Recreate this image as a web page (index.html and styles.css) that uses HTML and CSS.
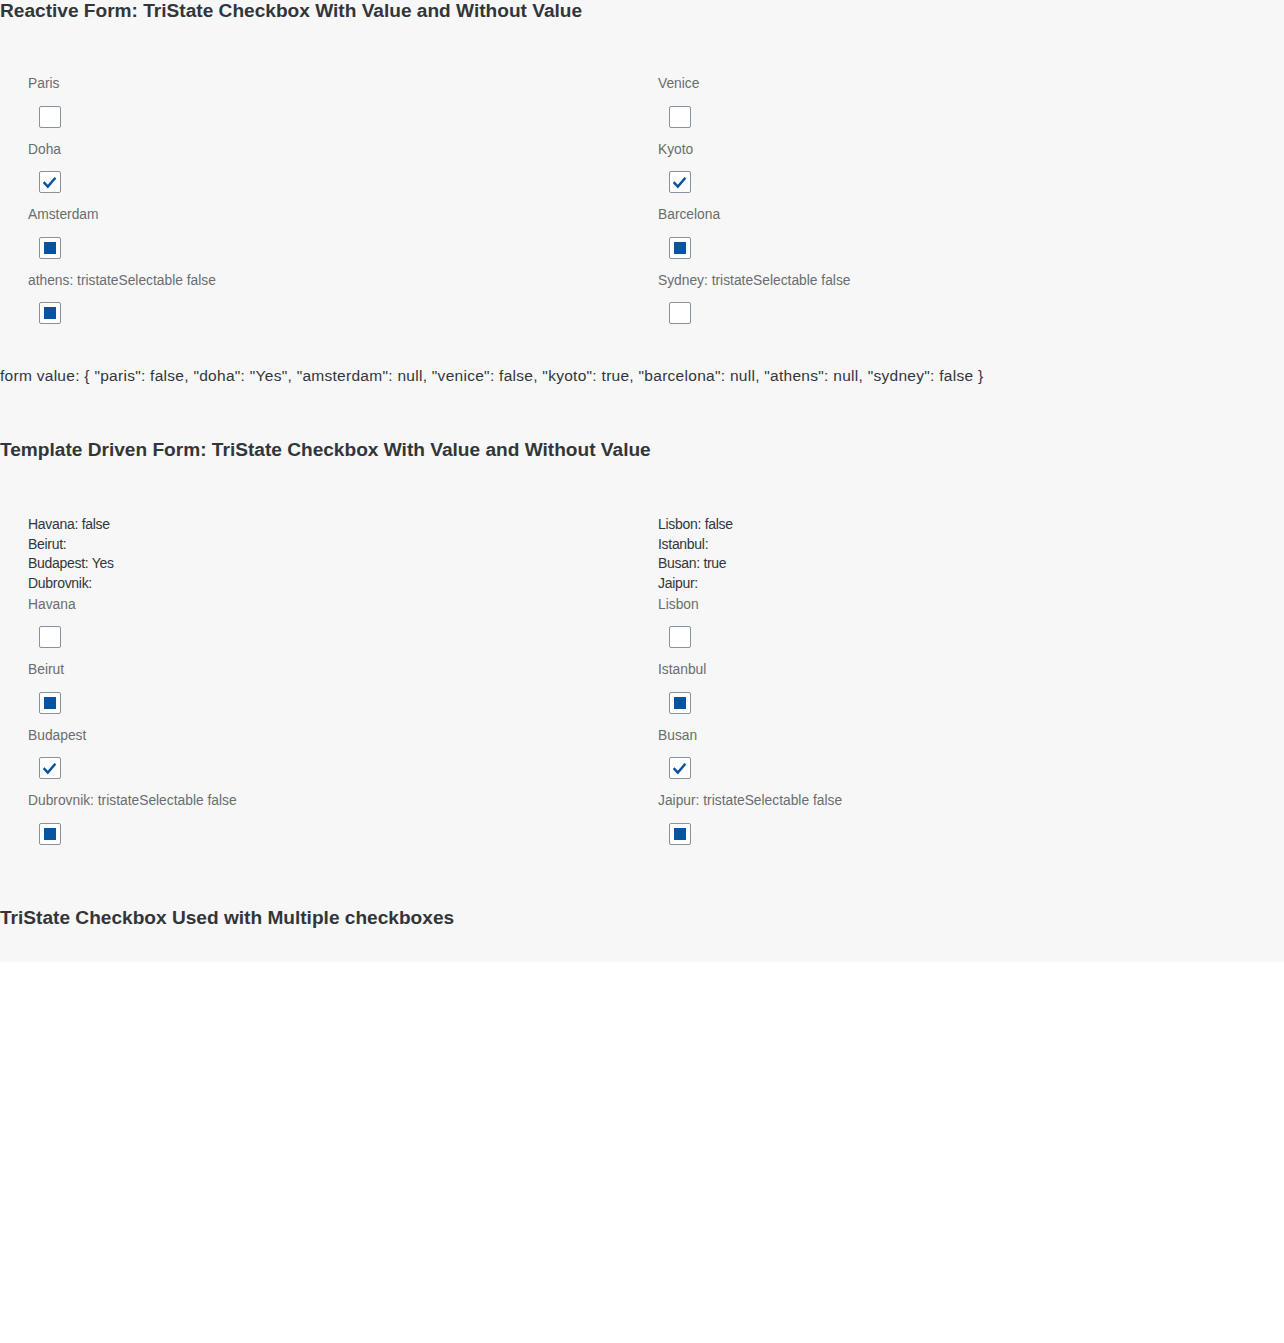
FILE: index.html
```html
<!DOCTYPE html>
<html lang="en">
<head>
<meta charset="utf-8">
<title>TriState Checkbox</title>
<link rel="stylesheet" href="styles.css">
</head>
<body>
<div class="page">
  <h3 class="title">Reactive Form: TriState Checkbox With Value and Without Value</h3>
  <div class="grid grid-first">
    <div class="col">
      <div class="label">Paris</div>
      <div class="cb-row"><span class="cb"></span></div>
      <div class="label">Doha</div>
      <div class="cb-row"><span class="cb"><svg class="check" viewBox="0 0 22 22"><path d="M4.6 11.2 L8.8 15.6 L16.4 6.8"/></svg></span></div>
      <div class="label">Amsterdam</div>
      <div class="cb-row"><span class="cb"><span class="ind"></span></span></div>
      <div class="label">athens: tristateSelectable false</div>
      <div class="cb-row"><span class="cb"><span class="ind"></span></span></div>
    </div>
    <div class="col">
      <div class="label">Venice</div>
      <div class="cb-row"><span class="cb"></span></div>
      <div class="label">Kyoto</div>
      <div class="cb-row"><span class="cb"><svg class="check" viewBox="0 0 22 22"><path d="M4.6 11.2 L8.8 15.6 L16.4 6.8"/></svg></span></div>
      <div class="label">Barcelona</div>
      <div class="cb-row"><span class="cb"><span class="ind"></span></span></div>
      <div class="label">Sydney: tristateSelectable false</div>
      <div class="cb-row"><span class="cb"></span></div>
    </div>
  </div>
  <div class="form-value">form value: { "paris": false, "doha": "Yes", "amsterdam": null, "venice": false, "kyoto": true, "barcelona": null, "athens": null, "sydney": false }</div>

  <h3 class="title title-2">Template Driven Form: TriState Checkbox With Value and Without Value</h3>
  <div class="grid grid-second">
    <div class="col">
      <div class="value">Havana: false</div>
      <div class="value">Beirut:</div>
      <div class="value">Budapest: Yes</div>
      <div class="value">Dubrovnik:</div>
      <div class="label">Havana</div>
      <div class="cb-row"><span class="cb"></span></div>
      <div class="label">Beirut</div>
      <div class="cb-row"><span class="cb"><span class="ind"></span></span></div>
      <div class="label">Budapest</div>
      <div class="cb-row"><span class="cb"><svg class="check" viewBox="0 0 22 22"><path d="M4.6 11.2 L8.8 15.6 L16.4 6.8"/></svg></span></div>
      <div class="label">Dubrovnik: tristateSelectable false</div>
      <div class="cb-row"><span class="cb"><span class="ind"></span></span></div>
    </div>
    <div class="col">
      <div class="value">Lisbon: false</div>
      <div class="value">Istanbul:</div>
      <div class="value">Busan: true</div>
      <div class="value">Jaipur:</div>
      <div class="label">Lisbon</div>
      <div class="cb-row"><span class="cb"></span></div>
      <div class="label">Istanbul</div>
      <div class="cb-row"><span class="cb"><span class="ind"></span></span></div>
      <div class="label">Busan</div>
      <div class="cb-row"><span class="cb"><svg class="check" viewBox="0 0 22 22"><path d="M4.6 11.2 L8.8 15.6 L16.4 6.8"/></svg></span></div>
      <div class="label">Jaipur: tristateSelectable false</div>
      <div class="cb-row"><span class="cb"><span class="ind"></span></span></div>
    </div>
  </div>

  <h3 class="title title-3">TriState Checkbox Used with Multiple checkboxes</h3>
</div>
</body>
</html>
```

FILE: styles.css
```css
html, body {
  margin: 0;
  padding: 0;
  background: #ffffff;
}

body {
  font-family: "Liberation Sans", Arial, sans-serif;
  color: #32363a;
}

.page {
  background: #f7f7f7;
  padding-bottom: 33px;
}

.title {
  margin: 0;
  font-size: 19.1px;
  line-height: 22px;
  font-weight: bold;
  color: #32363a;
}

.title-2 {
  margin-top: 53px;
}

.title-3 {
  margin-top: 51px;
}

.grid {
  display: grid;
  grid-template-columns: 630px 630px;
  padding-left: 28px;
}

.grid-first {
  margin-top: 51px;
}

.grid-second {
  margin-top: 54px;
}

.col {
  display: flex;
  flex-direction: column;
}

.label {
  height: 21.5px;
  line-height: 21.5px;
  font-size: 13.8px;
  color: #6a6d70;
  white-space: nowrap;
}

.value {
  height: 19.67px;
  line-height: 19.67px;
  font-size: 14px;
  letter-spacing: -0.3px;
  color: #32363a;
  white-space: nowrap;
}

.cb-row {
  height: 44px;
  padding: 0 11px;
  display: flex;
  align-items: center;
}

.cb {
  box-sizing: border-box;
  width: 22px;
  height: 22px;
  border: 1px solid #89919a;
  border-radius: 2px;
  background: #ffffff;
  position: relative;
  display: flex;
  align-items: center;
  justify-content: center;
}

.ind {
  width: 12px;
  height: 12px;
  background: #0854a0;
}

.check {
  position: absolute;
  left: -1px;
  top: -1px;
  width: 22px;
  height: 22px;
}

.check path {
  fill: none;
  stroke: #0854a0;
  stroke-width: 2.4;
  stroke-linecap: butt;
  stroke-linejoin: miter;
}

.form-value {
  margin-top: 31px;
  font-size: 15.5px;
  line-height: 20px;
  letter-spacing: 0.28px;
  color: #32363a;
  white-space: nowrap;
}
```
